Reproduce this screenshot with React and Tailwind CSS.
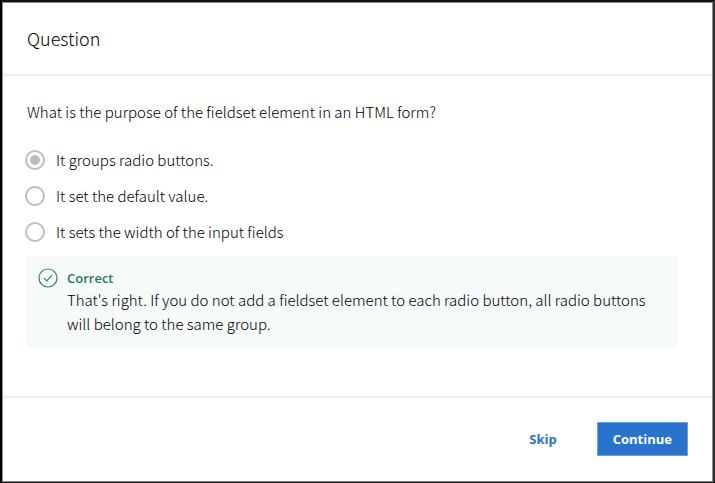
import { useState } from "react";

const options = [
  "It groups radio buttons.",
  "It set the default value.",
  "It sets the width of the input fields",
];

function CheckIcon() {
  return (
    <svg className="h-5 w-5 shrink-0" viewBox="0 0 20 20" fill="none" stroke="#2c8a5e" aria-hidden="true">
      <circle cx="10" cy="10" r="9" strokeWidth="1.2" />
      <path d="M6 10.2 8.8 13 14 7.2" strokeWidth="1.2" />
    </svg>
  );
}

export default function App() {
  const [selected, setSelected] = useState(0);

  return (
    <div className="flex min-h-screen flex-col border-t-2 border-r-2 border-b border-l-2 border-t-[#151111] border-r-[#303030] border-b-[#111111] border-l-black bg-white font-['Noto_Sans_CJK_SC','Open_Sans',sans-serif] text-[15px] leading-6 font-light text-black">
      <main className="flex grow flex-col border border-[#8a8a8a]">
        <header className="flex h-[73px] items-center border-b-2 border-[#eeeeee] px-6 pb-[2px]">
          <h1 className="text-lg leading-7">Question</h1>
        </header>

        <section className="grow px-6 pt-6">
          <fieldset>
            <legend className="mb-6">What is the purpose of the fieldset element in an HTML form?</legend>
            <div className="-ml-[2px] flex flex-col gap-3">
              {options.map((option, index) => (
                <label key={option} className="flex items-center gap-[11px]">
                  <input
                    type="radio"
                    name="answer"
                    checked={selected === index}
                    onChange={() => setSelected(index)}
                    className="h-5 w-5 shrink-0 appearance-none rounded-full border-2 border-[#bdbdbd] bg-white bg-clip-content p-[3px] checked:bg-[#bdbdbd]"
                  />
                  {option}
                </label>
              ))}
            </div>
          </fieldset>

          <div className="mt-3 mr-[10px] flex gap-[9px] bg-[#f6fbfa] py-3 pr-3 pl-[11px]" role="status">
            <CheckIcon />
            <div>
              <h2 className="font-['Open_Sans',sans-serif] text-[13px] leading-5 font-semibold text-[#1f7a50]">Correct</h2>
              <p>
                That's right. If you do not add a fieldset element to each radio button, all radio buttons will belong
                to the same group.
              </p>
            </div>
          </div>
        </section>

        <footer className="flex h-[85px] items-center justify-end gap-6 border-t-2 border-[#eeeeee] px-6 pb-[2px] font-['Open_Sans',sans-serif] text-[13px] leading-5 font-bold">
          <button type="button" className="px-4 text-[#2a73cc]">
            Skip
          </button>
          <button type="button" className="h-[34px] border border-[#6ba0e0] bg-[#2a73cc] px-[15px] text-white">
            Continue
          </button>
        </footer>
      </main>
    </div>
  );
}
